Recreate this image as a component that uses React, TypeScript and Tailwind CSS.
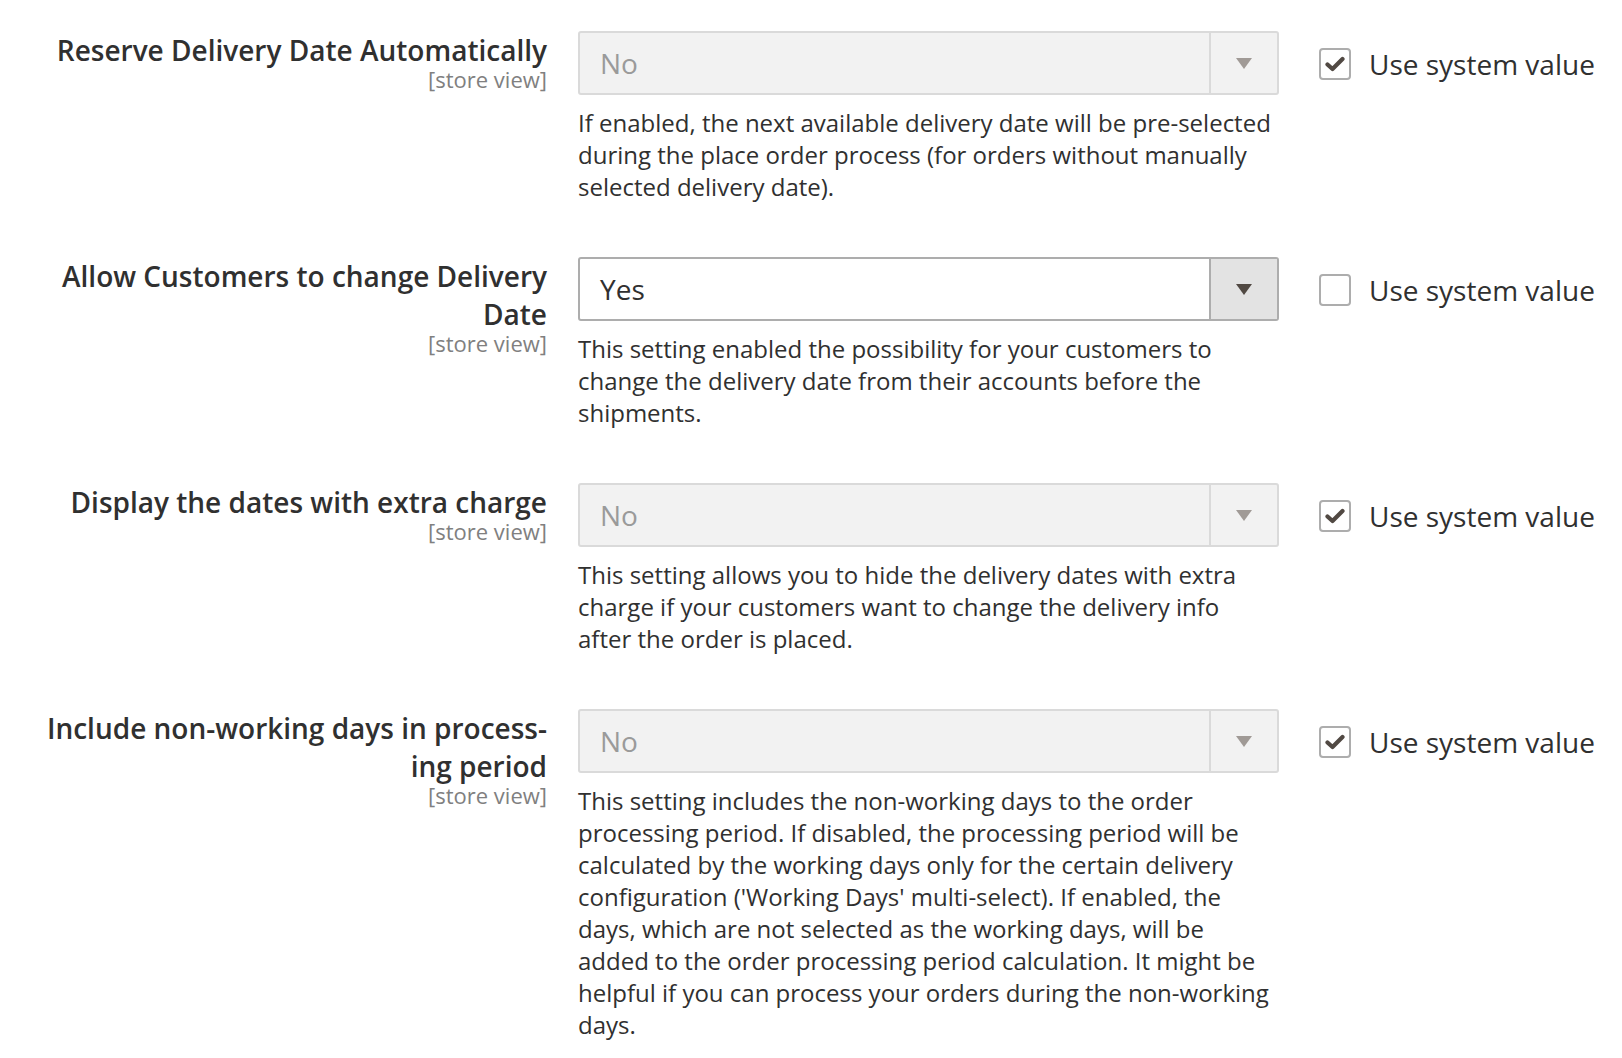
import React from "react";

type Row = {
  label: React.ReactNode;
  value: string;
  enabled: boolean;
  checked: boolean;
  desc: string;
};

const rows: Row[] = [
  {
    label: "Reserve Delivery Date Automatically",
    value: "No",
    enabled: false,
    checked: true,
    desc: "If enabled, the next available delivery date will be pre-selected during the place order process (for orders without manually selected delivery date).",
  },
  {
    label: "Allow Customers to change Delivery Date",
    value: "Yes",
    enabled: true,
    checked: false,
    desc: "This setting enabled the possibility for your customers to change the delivery date from their accounts before the shipments.",
  },
  {
    label: "Display the dates with extra charge",
    value: "No",
    enabled: false,
    checked: true,
    desc: "This setting allows you to hide the delivery dates with extra charge if your customers want to change the delivery info after the order is placed.",
  },
  {
    label: (
      <>
        Include non-working days in process-
        <br />
        ing period
      </>
    ),
    value: "No",
    enabled: false,
    checked: true,
    desc: "This setting includes the non-working days to the order processing period. If disabled, the processing period will be calculated by the working days only for the certain delivery configuration ('Working Days' multi-select). If enabled, the days, which are not selected as the working days, will be added to the order processing period calculation. It might be helpful if you can process your orders during the non-working days.",
  },
];

function Select({ value, enabled }: { value: string; enabled: boolean }) {
  return (
    <div
      className={
        enabled
          ? "flex h-[64px] w-[701px] rounded-[3px] border-2 border-[#adadad] bg-white"
          : "flex h-[64px] w-[701px] rounded-[3px] border-2 border-[#dadada] bg-[#f2f2f2]"
      }
    >
      <div
        className={
          enabled
            ? "flex flex-1 items-center pl-[20px] text-[28px] text-[#303030]"
            : "flex flex-1 items-center pl-[20px] text-[28px] text-[#9a9a9a]"
        }
      >
        {value}
      </div>
      <div
        className={
          enabled
            ? "flex w-[68px] items-center justify-center border-l-2 border-[#adadad] bg-[#e3e3e3]"
            : "flex w-[68px] items-center justify-center border-l-2 border-[#dadada]"
        }
      >
        <svg width="16" height="11" viewBox="0 0 16 11">
          <path d="M0 0 L16 0 L8 11 Z" fill={enabled ? "#514943" : "#a09a96"} />
        </svg>
      </div>
    </div>
  );
}

function Checkbox({ checked }: { checked: boolean }) {
  return (
    <div className="flex h-[32px] w-[32px] items-center justify-center rounded-[4px] border-2 border-[#adadad] bg-white">
      {checked && (
        <svg width="20" height="16" viewBox="0 0 20 16">
          <path
            d="M2.5 8.5 L7.5 13 L17.5 3"
            fill="none"
            stroke="#514943"
            strokeWidth="4.2"
            strokeLinecap="round"
            strokeLinejoin="round"
          />
        </svg>
      )}
    </div>
  );
}

export default function App() {
  return (
    <div
      className="min-h-[1058px] w-[1622px] bg-white pt-[31px] text-[#303030]"
      style={{ fontFamily: '"Open Sans", "Noto Sans", sans-serif' }}
    >
      {rows.map((r, i) => (
        <div key={i} className="flex pb-[54px]">
          <div className="w-[547px] shrink-0 text-right">
            <div className="text-[28px] font-semibold leading-[38px] text-[#303030]">
              {r.label}
            </div>
            <div className="text-[22px] leading-[20px] text-[#808080]">[store view]</div>
          </div>
          <div className="ml-[31px] w-[701px] shrink-0">
            <Select value={r.value} enabled={r.enabled} />
            <p className="mt-[12px] w-[695px] text-[24px] leading-[32px] text-[#303030]">{r.desc}</p>
          </div>
          <div className="ml-[40px] flex h-[64px] items-center gap-[18px] pt-[1px]">
            <Checkbox checked={r.checked} />
            <span className="text-[28px] text-[#303030]">Use system value</span>
          </div>
        </div>
      ))}
    </div>
  );
}
